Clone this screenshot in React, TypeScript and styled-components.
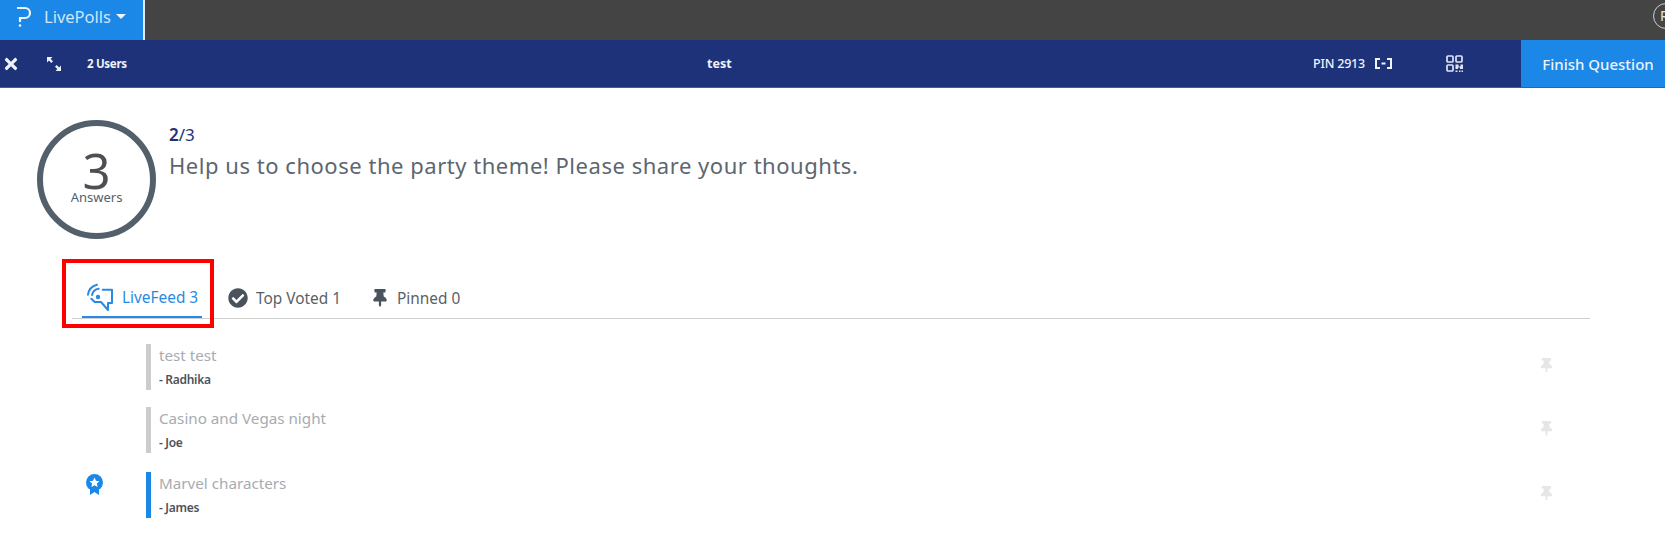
import React from "react";
import styled, { createGlobalStyle } from "styled-components";
import { FaThumbtack, FaCheckCircle, FaTimes } from "react-icons/fa";

const Global = createGlobalStyle`
  html, body { margin: 0; padding: 0; background: #fff; overflow: hidden; }
  body { font-family: "Noto Sans", "Open Sans", Arial, sans-serif; }
`;

const Page = styled.div`
  position: relative;
  width: 1665px;
  height: 550px;
  overflow: hidden;
`;

const TopBar = styled.header`
  height: 40px;
  background: #444444;
  display: flex;
  justify-content: space-between;
  overflow: hidden;
`;

const AppButton = styled.div`
  width: 143px;
  background: #1b87e6;
  border-right: 2px solid #dfe9f2;
  box-sizing: content-box;
  display: flex;
  align-items: center;
  color: #cfe6fb;
  font-size: 16.5px;
  padding-bottom: 7px;
`;

const Logo = styled.svg`
  width: 16px;
  height: 22px;
  margin: 0 12px 0 16px;
`;

const Caret = styled.span`
  width: 0;
  height: 0;
  margin-left: 5px;
  border-left: 5.5px solid transparent;
  border-right: 5.5px solid transparent;
  border-top: 5.5px solid #eef6fd;
`;

const Avatar = styled.div`
  width: 26px;
  height: 26px;
  margin: 3px -14px 0 0;
  box-sizing: border-box;
  border: 1.5px solid #cfcfcf;
  border-radius: 50%;
  color: #e5e5e5;
  font-size: 14px;
  line-height: 23px;
  padding-left: 6px;
`;

const NavBar = styled.nav`
  height: 48px;
  background: #1d3278;
  border-bottom: 1px solid #4a5a92;
  box-sizing: border-box;
  display: flex;
  align-items: center;
  color: #f0f3fa;
  padding-left: 2px;
`;

const NavIcon = styled.span<{ $w: number }>`
  width: ${(p) => p.$w}px;
  display: flex;
  align-items: center;
  flex: none;
`;

const Users = styled.span`
  width: 150px;
  flex: none;
  font-size: 11.5px;
  font-weight: 700;
  letter-spacing: -0.3px;
`;

const NavTitle = styled.span`
  width: 500px;
  flex: none;
  padding-left: 470px;
  box-sizing: border-box;
  font-size: 12.5px;
  font-weight: 700;
`;

const Pin = styled.span`
  width: 62px;
  flex: none;
  font-size: 12.5px;
  font-weight: 500;
  letter-spacing: -0.2px;
  margin-left: 576px;
  white-space: nowrap;
`;

const Finish = styled.div`
  margin-left: auto;
  width: 144px;
  flex: none;
  height: 47px;
  box-sizing: border-box;
  padding-left: 10px;
  background: #1b87e6;
  color: #eaf4fd;
  font-size: 15px;
  font-weight: 500;
  display: flex;
  align-items: center;
  justify-content: center;
  white-space: nowrap;
`;

const Header = styled.section`
  display: flex;
  padding: 32px 0 0 37px;
  height: 119px;
`;

const Circle = styled.div`
  width: 119px;
  height: 119px;
  box-sizing: border-box;
  border: 6px solid #535f6b;
  border-radius: 50%;
  display: flex;
  flex-direction: column;
  align-items: center;
  color: #535f6b;
  flex: none;
  padding-top: 24px;
`;

const Count = styled.div`
  font-size: 49px;
  line-height: 40px;
  font-weight: 400;
  color: #4e4f55;
`;

const CountLabel = styled.div`
  font-size: 13px;
  line-height: 13px;
  margin-top: 1px;
`;

const Intro = styled.div`
  margin-left: 13px;
`;

const Step = styled.div`
  color: #1d3278;
  font-size: 17px;
  line-height: 20px;
  margin-top: 5px;
  b { font-weight: 600; }
`;

const Question = styled.h1`
  margin: 5px 0 0;
  font-size: 22px;
  line-height: 30px;
  font-weight: 400;
  color: #5c6670;
  letter-spacing: 0.53px;
`;

const Tabs = styled.div`
  display: flex;
  margin: 39px 75px 0 72px;
  height: 40px;
  padding-left: 10px;
  border-bottom: 1px solid #cfcfcf;
`;

const Tab = styled.div<{ $active?: boolean; $w: number; $after?: number }>`
  width: ${(p) => p.$w}px;
  margin-right: ${(p) => p.$after ?? 0}px;
  display: flex;
  align-items: center;
  height: 40px;
  box-sizing: border-box;
  color: ${(p) => (p.$active ? "#2a8ae3" : "#5a5f66")};
  border-bottom: ${(p) => (p.$active ? "2px solid #2a8ae3" : "none")};
  font-size: 15.4px;
  padding-left: ${(p) => (p.$active ? 5 : 0)}px;
  flex: none;
`;

const TabIcon = styled.span<{ $gap: number }>`
  display: flex;
  margin-right: ${(p) => p.$gap}px;
`;

const Feed = styled.div`
  padding: 25px 0 0 0;
  display: flex;
  flex-direction: column;
`;

const Row = styled.div<{ $gap: number }>`
  display: flex;
  height: 46px;
  margin-bottom: ${(p) => p.$gap}px;
`;

const Badge = styled.div`
  width: 146px;
  flex: none;
  padding: 2px 0 0 86px;
  box-sizing: border-box;
`;

const Bar = styled.div<{ $color: string }>`
  width: 5px;
  height: 46px;
  background: ${(p) => p.$color};
  flex: none;
`;

const Body = styled.div`
  padding: 1px 0 0 8px;
  width: 1388px;
  flex: none;
  box-sizing: border-box;
`;

const Answer = styled.div`
  font-size: 15.2px;
  line-height: 20px;
  color: #a8abb2;
`;

const Author = styled.div`
  font-size: 12px;
  line-height: 14px;
  margin-top: 8px;
  font-weight: 600;
  color: #4e5359;
  letter-spacing: -0.3px;
`;

const RowPin = styled.div`
  margin-top: 13px;
  color: #e6e6e6;
  font-size: 15px;
`;

const Highlight = styled.div`
  position: absolute;
  left: 62px;
  top: 259px;
  width: 152px;
  height: 69px;
  box-sizing: border-box;
  border: 4px solid #ff0000;
`;

const LogoMark = () => (
  <Logo viewBox="0 0 16 22" fill="none" stroke="#eaf5fe" strokeWidth="2.2">
    <path d="M1 2h8a5 5 0 0 1 0 10H4v4" />
    <circle cx="4" cy="19.500" r="1.300" fill="#eaf5fe" stroke="none" />
  </Logo>
);

const Expand = () => (
  <svg width="16" height="16" viewBox="0 0 16 16" fill="#eef2fa">
    <path d="M1 1h5.500L4.600 2.900 7 5.300 5.300 7 2.900 4.600 1 6.500zM15 15H9.500l1.900-1.900L9 10.700 10.700 9l2.400 2.400L15 9.500z" />
  </svg>
);

const Brackets = () => (
  <svg width="17" height="11" viewBox="0 0 17 11" fill="none" stroke="#f0f3fa" strokeWidth="2">
    <path d="M5 1H1v9h4M12 1h4v9h-4M6.500 5.500h4" />
  </svg>
);

const Qr = () => (
  <svg width="17" height="17" viewBox="0 0 17 17">
    <g fill="none" stroke="#dfe4f2" strokeWidth="1.700">
      <rect x="1" y="1" width="6" height="6" rx="1" />
      <rect x="10" y="1" width="6" height="6" rx="1" />
      <rect x="1" y="10" width="6" height="6" rx="1" />
    </g>
    <path d="M9.500 9.500h3v2h2v-2h2.500v4.500h-3v-1.500h-2V14h-2.500zM9.500 15.500h2V17h-2zM13 15.500h1.500V17H13zM15.500 15.500H17V17h-1.500z" fill="#dfe4f2" />
  </svg>
);

const LiveFeedIcon = () => (
  <svg width="27" height="28" viewBox="0 0 27 28" fill="none" stroke="#2a8ae3" strokeWidth="2" strokeLinecap="round" strokeLinejoin="round">
    <path d="M15.700 6.700H25V20h-4v7l-7-8H7.700L4.300 15.700" />
    <path d="M1 11.700A12 12 0 0 1 10 1.700" />
    <path d="M5 12A8 8 0 0 1 11.700 5.700" />
    <circle cx="11" cy="14" r="2.200" fill="#2a8ae3" stroke="none" />
  </svg>
);

const Ribbon = () => (
  <svg width="17" height="21" viewBox="0 0 17 21">
    <path d="M4 12v9l4.500-3 4.500 3v-9z" fill="#1b87e6" />
    <circle cx="8.500" cy="8.500" r="8.500" fill="#1b87e6" />
    <path d="M8.500 3.600l1.500 3.200 3.400.4-2.500 2.300.7 3.400-3.100-1.700-3.100 1.700.7-3.400-2.500-2.300 3.400-.4z" fill="#fff" />
  </svg>
);

const answers = [
  { text: "test test", by: "- Radhika", color: "#cccccc", gap: 17, badge: false },
  { text: "Casino and Vegas night", by: "- Joe", color: "#cccccc", gap: 19, badge: false },
  { text: "Marvel characters", by: "- James", color: "#1b87e6", gap: 0, badge: true },
];

export default function App() {
  return (
    <Page>
      <Global />
      <TopBar>
        <AppButton>
          <LogoMark />
          LivePolls
          <Caret />
        </AppButton>
        <Avatar>R</Avatar>
      </TopBar>
      <NavBar>
        <NavIcon $w={44}>
          <FaTimes size={18} />
        </NavIcon>
        <NavIcon $w={41}>
          <Expand />
        </NavIcon>
        <Users>2 Users</Users>
        <NavTitle>test</NavTitle>
        <Pin>PIN 2913</Pin>
        <NavIcon $w={71}>
          <Brackets />
        </NavIcon>
        <NavIcon $w={17}>
          <Qr />
        </NavIcon>
        <Finish>Finish Question</Finish>
      </NavBar>
      <Header>
        <Circle>
          <Count>3</Count>
          <CountLabel>Answers</CountLabel>
        </Circle>
        <Intro>
          <Step>
            <b>2</b>/3
          </Step>
          <Question>Help us to choose the party theme! Please share your thoughts.</Question>
        </Intro>
      </Header>
      <Tabs>
        <Tab $active $w={120} $after={26}>
          <TabIcon $gap={8}>
            <LiveFeedIcon />
          </TabIcon>
          LiveFeed 3
        </Tab>
        <Tab $w={143}>
          <TabIcon $gap={8}>
            <FaCheckCircle size={20} color="#4a525b" />
          </TabIcon>
          Top Voted 1
        </Tab>
        <Tab $w={120}>
          <TabIcon $gap={8}>
            <FaThumbtack size={18} color="#4a525b" />
          </TabIcon>
          Pinned 0
        </Tab>
      </Tabs>
      <Feed>
        {answers.map((a) => (
          <Row key={a.text} $gap={a.gap}>
            <Badge>{a.badge && <Ribbon />}</Badge>
            <Bar $color={a.color} />
            <Body>
              <Answer>{a.text}</Answer>
              <Author>{a.by}</Author>
            </Body>
            <RowPin>
              <FaThumbtack />
            </RowPin>
          </Row>
        ))}
      </Feed>
      <Highlight />
    </Page>
  );
}
